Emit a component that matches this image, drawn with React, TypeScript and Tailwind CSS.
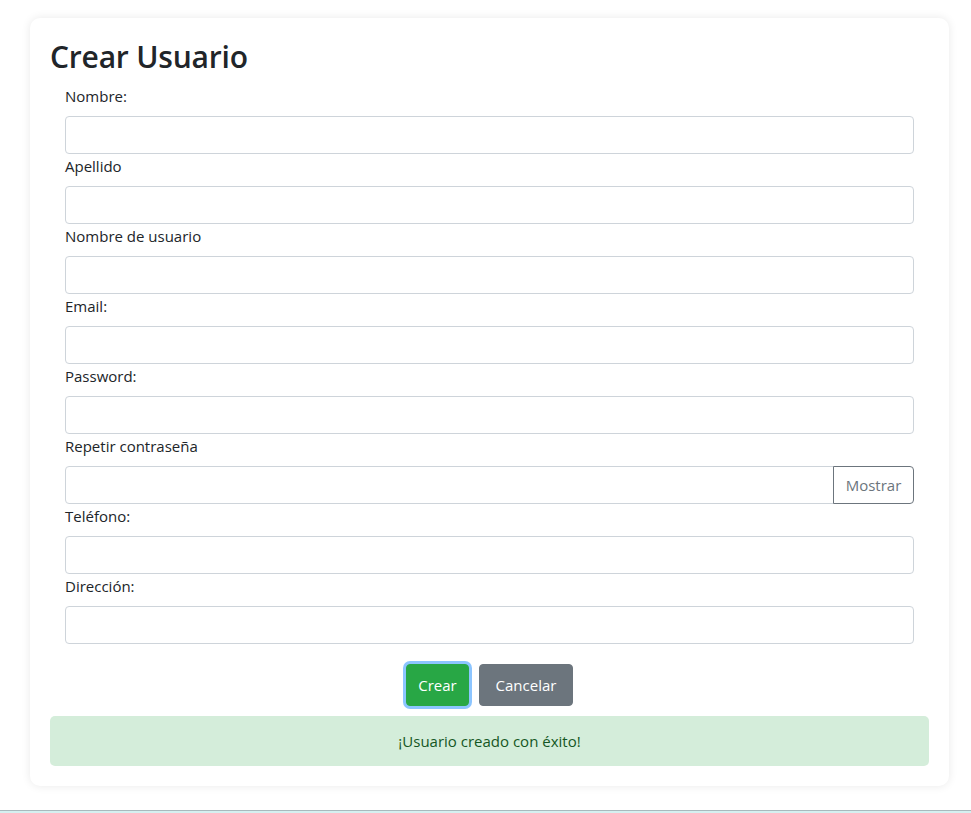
import { useState } from "react";

const FIELDS = [
  { label: "Nombre:", type: "text" },
  { label: "Apellido", type: "text" },
  { label: "Nombre de usuario", type: "text" },
  { label: "Email:", type: "email" },
  { label: "Password:", type: "password" },
  { label: "Repetir contraseña", type: "password", toggle: true },
  { label: "Teléfono:", type: "tel" },
  { label: "Dirección:", type: "text" },
];

const inputCls =
  "block w-full h-[38px] px-3 bg-white border border-[#ced4da] rounded-[4px] text-base text-[#495057] outline-none";

export default function App() {
  const [show, setShow] = useState(false);

  return (
    <div
      className="min-h-screen bg-white text-[#212529] text-[15px] leading-6"
      style={{ fontFamily: '"Segoe UI", "Open Sans", "Noto Sans", sans-serif' }}
    >
      <div className="pt-[18px] pl-[30px]">
        <div className="w-[919px] bg-white rounded-[10px] shadow-[0_0_10px_rgba(0,0,0,0.09)] p-5">
          <h1 className="text-[30px] leading-[38px] font-semibold tracking-[-0.2px] mb-2">Crear Usuario</h1>

          <form className="mx-[15px]" onSubmit={(e) => e.preventDefault()}>
            {FIELDS.map((f) => (
              <div key={f.label}>
                <label className="block mb-2">{f.label}</label>
                {f.toggle ? (
                  <div className="flex">
                    <input
                      type={show ? "text" : f.type}
                      className="block flex-1 min-w-0 h-[38px] px-3 bg-white border border-[#ced4da] rounded-l-[4px] text-base outline-none"
                    />
                    <button
                      type="button"
                      onClick={() => setShow(!show)}
                      className="h-[38px] w-[81px] -ml-px border border-[#6c757d] rounded-r-[4px] text-[#6c757d] bg-white"
                    >
                      Mostrar
                    </button>
                  </div>
                ) : (
                  <input type={f.type} className={inputCls} />
                )}
              </div>
            ))}

            <div className="flex justify-center gap-[10px] mt-5">
              <button
                type="submit"
                className="h-[42px] w-[63px] rounded-[4px] bg-[#28a745] border border-[#28a745] text-white ring-[3px] ring-[#8cc5ff]"
              >
                Crear
              </button>
              <button
                type="button"
                className="h-[42px] w-[94px] rounded-[4px] bg-[#6c757d] border border-[#6c757d] text-white"
              >
                Cancelar
              </button>
            </div>
          </form>

          <div className="mt-[10px] h-[50px] flex items-center justify-center rounded-[5px] bg-[#d4edda] text-[#155724]">
            ¡Usuario creado con éxito!
          </div>
        </div>
      </div>

      <div className="mt-[24px] h-[3px] border-t border-[#a9b9bd] bg-[#d5f0f0]" />
    </div>
  );
}
